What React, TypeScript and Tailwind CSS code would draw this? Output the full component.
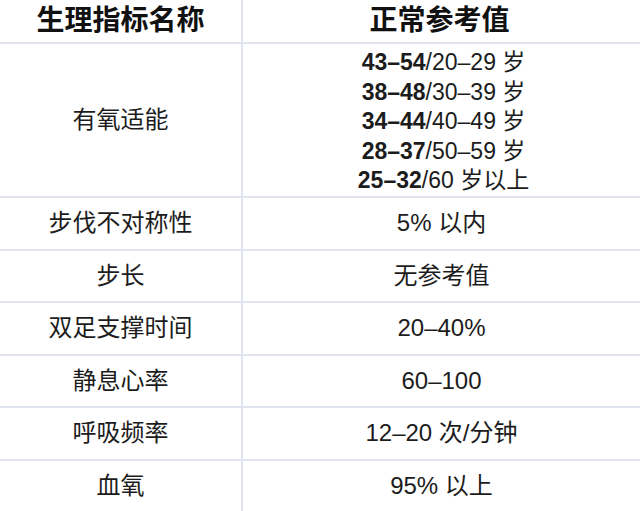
const ageRanges = [
  ['43–54', '/20–29 岁'],
  ['38–48', '/30–39 岁'],
  ['34–44', '/40–49 岁'],
  ['28–37', '/50–59 岁'],
  ['25–32', '/60 岁以上'],
];

const rows = [
  ['步伐不对称性', '5% 以内'],
  ['步长', '无参考值'],
  ['双足支撑时间', '20–40%'],
  ['静息心率', '60–100'],
  ['呼吸频率', '12–20 次/分钟'],
  ['血氧', '95% 以上'],
];

export default function App() {
  return (
    <main className="h-[511px] w-[640px] overflow-hidden bg-white font-['Liberation_Sans','Noto_Sans_CJK_SC',sans-serif] text-[#1c1c1c]">
      <div className="grid grid-cols-[243px_1fr]">
        <div className="flex h-[44px] items-center justify-center border-b-2 border-r-2 border-[#dfe4ef] text-[28px] font-bold text-[#111]">
          生理指标名称
        </div>
        <div className="flex h-[44px] items-center justify-center border-b-2 border-[#dfe4ef] pr-1 text-[28px] font-bold text-[#111]">
          正常参考值
        </div>

        <div className="flex h-[154px] items-center justify-center border-b-2 border-r-2 border-[#dfe4ef] text-[24px]">
          有氧适能
        </div>
        <div className="flex h-[154px] flex-col items-center justify-center border-b-2 border-[#dfe4ef] pl-1 pt-1 text-[23px] leading-[29.5px]">
          {ageRanges.map(([value, age]) => (
            <p key={value}>
              <span className="font-bold">{value}</span>
              {age}
            </p>
          ))}
        </div>

        {rows.map(([name, value]) => (
          <div key={name} className="contents">
            <div className="flex h-[52.5px] items-center justify-center border-b-2 border-r-2 border-[#dfe4ef] text-[24px]">
              {name}
            </div>
            <div className="flex h-[52.5px] items-center justify-center border-b-2 border-[#dfe4ef] text-[24px]">
              {value}
            </div>
          </div>
        ))}
      </div>
    </main>
  );
}
